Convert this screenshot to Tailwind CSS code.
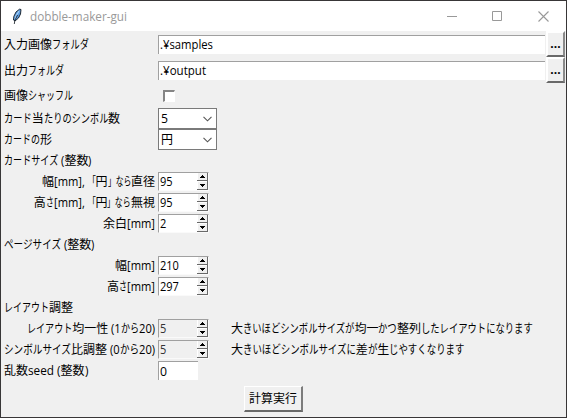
<!DOCTYPE html>
<html lang="ja">
<head>
<meta charset="utf-8">
<title>dobble-maker-gui</title>
<script src="https://cdn.jsdelivr.net/npm/@tailwindcss/browser@4"></script>
</head>
<body class="h-[418px] w-[567px] overflow-hidden bg-[#383637] font-['Open_Sans','Noto_Sans_CJK_JP',sans-serif] text-[12px] leading-[21px] text-black">
<div class="flex h-[418px] w-[567px] flex-col border border-[#383637] bg-[#f0f0f0]">
  <header class="flex h-[30px] shrink-0 items-center bg-white">
    <svg class="ml-[10px] h-[17px] w-[12px] shrink-0" viewBox="0 0 12 17">
      <path d="M2.5 12 2.8 8.5 5 4 8.5 1.2 10 1.5 9.5 6 7.5 10 4 13z" fill="#5b9be0" stroke="#111820" stroke-width=".9"/>
      <path d="M8 3 5.2 7.5 4 11" fill="none" stroke="#a9d2f6" stroke-width="1.1"/>
      <path d="M6.5 7 3.8 12.5 3.3 16" fill="none" stroke="#111820" stroke-width=".8"/>
    </svg>
    <span class="ml-[7px] whitespace-pre text-[#999]" data-w="97">dobble-maker-gui</span>
    <svg class="ml-auto mr-[17px] h-[11px] w-[102px]" viewBox="0 0 102 11" fill="none" stroke="#999">
      <path d="M0 5.5h10M45.5.5h9v9h-9z"/><path d="M91.5.5l10 10M101.5.5l-10 10" stroke-width="1.1"/>
    </svg>
  </header>

  <main class="flex flex-1 flex-col">
    <div class="flex h-[26px] items-center">
      <div class="w-[157px] pl-[3px]"><span class="whitespace-pre" data-w="85">入力画像フォルダ</span></div>
      <div class="flex h-[19px] w-[387px] items-center border-l border-t border-[#a0a0a0] bg-white pl-px"><span class="whitespace-pre" data-w="53">.¥samples</span></div>
      <button class="ml-px h-[26px] w-[19px] border-b-2 border-l-2 border-r-2 border-t-2 border-b-[#696969] border-l-white border-r-[#8a8a8a] border-t-white text-[12px] font-bold leading-[20px]">...</button>
    </div>
    <div class="flex h-[26px] items-center">
      <div class="w-[157px] pl-[3px]"><span class="whitespace-pre" data-w="60">出力フォルダ</span></div>
      <div class="flex h-[19px] w-[387px] items-center border-l border-t border-[#a0a0a0] bg-white pl-px"><span class="whitespace-pre" data-w="46">.¥output</span></div>
      <button class="ml-px h-[26px] w-[19px] border-b-2 border-l-2 border-r-2 border-t-2 border-b-[#696969] border-l-white border-r-[#8a8a8a] border-t-white text-[12px] font-bold leading-[20px]">...</button>
    </div>
    <div class="flex h-[25px] items-center">
      <div class="w-[162px] pl-[3px]"><span class="whitespace-pre" data-w="69">画像シャッフル</span></div>
      <div class="size-[12px] border-b border-l-2 border-r border-t-2 border-b-white border-l-[#858585] border-r-white border-t-[#858585] bg-white"></div>
    </div>
    <div class="flex h-[21px] items-center">
      <div class="w-[157px] pl-[3px]"><span class="whitespace-pre" data-w="116">カード当たりのシンボル数</span></div>
      <div class="flex h-[21px] w-[59px] items-center border border-[#7a7a7a] bg-white pl-[2px]"><span class="whitespace-pre" data-w="7">5</span>
        <svg class="ml-auto mr-[4px] h-[6px] w-[9px]" viewBox="0 0 9 6" fill="none" stroke="#555" stroke-width="1.1"><path d="M.5.8l4 4 4-4"/></svg></div>
    </div>
    <div class="flex h-[21px] items-center">
      <div class="w-[157px] pl-[3px]"><span class="whitespace-pre" data-w="48">カードの形</span></div>
      <div class="flex h-[21px] w-[59px] items-center border border-[#7a7a7a] bg-white pl-[2px]"><span class="whitespace-pre" data-w="12">円</span>
        <svg class="ml-auto mr-[4px] h-[6px] w-[9px]" viewBox="0 0 9 6" fill="none" stroke="#555" stroke-width="1.1"><path d="M.5.8l4 4 4-4"/></svg></div>
    </div>
    <div class="h-[21px] pl-[3px]"><span class="whitespace-pre" data-w="88">カードサイズ (整数)</span></div>
    <div class="flex h-[21px] items-center" data-spin="95"><div class="flex w-[154px] justify-end"><span class="whitespace-pre" data-w="113">幅[mm], 「円」なら直径</span></div></div>
    <div class="flex h-[21px] items-center" data-spin="95"><div class="flex w-[154px] justify-end"><span class="whitespace-pre" data-w="121">高さ[mm], 「円」なら無視</span></div></div>
    <div class="flex h-[21px] items-center" data-spin="2"><div class="flex w-[154px] justify-end"><span class="whitespace-pre" data-w="52">余白[mm]</span></div></div>
    <div class="h-[21px] pl-[3px]"><span class="whitespace-pre" data-w="91">ページサイズ (整数)</span></div>
    <div class="flex h-[21px] items-center" data-spin="210"><div class="flex w-[154px] justify-end"><span class="whitespace-pre" data-w="40">幅[mm]</span></div></div>
    <div class="flex h-[21px] items-center" data-spin="297"><div class="flex w-[154px] justify-end"><span class="whitespace-pre" data-w="48">高さ[mm]</span></div></div>
    <div class="h-[21px] pl-[3px]"><span class="whitespace-pre" data-w="69">レイアウト調整</span></div>
    <div class="flex h-[21px] items-center" data-spin="5" data-off><div class="flex w-[154px] justify-end"><span class="whitespace-pre" data-w="128">レイアウト均一性 (1から20)</span></div><div class="order-2 ml-[22px]"><span class="whitespace-pre" data-w="302">大きいほどシンボルサイズが均一かつ整列したレイアウトになります</span></div></div>
    <div class="flex h-[21px] items-center" data-spin="5" data-off><div class="flex w-[154px] justify-end"><span class="whitespace-pre" data-w="151">シンボルサイズ比調整 (0から20)</span></div><div class="order-2 ml-[22px]"><span class="whitespace-pre" data-w="234">大きいほどシンボルサイズに差が生じやすくなります</span></div></div>
    <div class="flex h-[21px] items-center">
      <div class="w-[157px] pl-[3px]"><span class="whitespace-pre" data-w="84">乱数seed (整数)</span></div>
      <div class="flex h-[19px] w-[40px] items-center border-l border-t border-[#a0a0a0] bg-white pl-px"><span class="whitespace-pre" data-w="7">0</span></div>
    </div>
    <button class="ml-[243px] mt-[5px] flex h-[26px] w-[59px] items-center justify-center border-b-2 border-l border-r-2 border-t border-b-[#696969] border-l-white border-r-[#7c7c7c] border-t-white"><span class="whitespace-pre" data-w="48">計算実行</span></button>
  </main>
</div>

<template id="spinner">
  <div class="order-1 ml-[3px] flex h-[19px] w-[51px] items-center justify-between border-b border-l border-r border-t border-b-[#fafafa] border-l-[#a0a0a0] border-r-[#fafafa] border-t-[#a0a0a0] bg-white pl-px">
    <span class="whitespace-pre"></span>
    <svg class="h-[17px] w-[11px] shrink-0" viewBox="0 0 11 17" shape-rendering="crispEdges">
      <path d="M0 0h11v17H0z" fill="#f0f0f0"/>
      <path d="M10.5 0v17M0 7.5h11M0 16.5h11" stroke="#696969" fill="none"/>
      <path d="M0 8.5h10M.5 0v7M.5 8v8" stroke="#fff" fill="none"/>
      <path d="M5 2h1v1h1v1h1v1H3V4h1V3h1zM3 11h5v1H7v1H6v1H5v-1H4v-1H3z" fill="#000"/>
    </svg>
  </div>
</template>
<script>
  // Add the number spinners
  document.querySelectorAll('[data-spin]').forEach(row => {
    const s = document.getElementById('spinner').content.firstElementChild.cloneNode(true);
    const t = s.querySelector('span');
    t.textContent = row.dataset.spin;
    t.dataset.w = row.dataset.spin.length * 6.3;
    if ('off' in row.dataset) { s.classList.remove('bg-white'); t.classList.add('text-[#333]'); }
    row.append(s);
  });
  const ctx = document.createElement('canvas').getContext('2d');
  ctx.font = '12px "Open Sans", "Noto Sans CJK JP", sans-serif';
  document.querySelectorAll('[data-w]').forEach(el => {
    const runs = el.textContent.match(/[\u4e00-\u9fff]+|[\u3000-\u30ff]+|[\u0000-\u00ff]+/g);
    el.textContent = '';
    el.classList.add('inline-flex');
    const parts = runs.map(r => {
      const s = document.createElement('span');
      s.textContent = r;
      s.className = 'block shrink-0 origin-left';
      el.append(s);
      const kind = /[\u4e00-\u9fff]/.test(r) ? 'han' : /[\u3000-\u30ff]/.test(r) ? 'kana' : 'latin';
      return { s, w: ctx.measureText(r).width, kind };
    });
    const sum = kind => parts.filter(p => p.kind === kind).reduce((a, p) => a + p.w, 0);
    const han = sum('han'), kana = sum('kana'), latin = sum('latin');
    const scale = { han: 1 };
    scale.latin = kana ? 0.93 : latin ? (el.dataset.w - han) / latin : 1;
    scale.kana = kana ? (el.dataset.w - han - latin * scale.latin) / kana : 1;
    parts.forEach(p => {
      if (p.kind === 'han') return;
      const k = scale[p.kind];
      p.s.style.transform = `scaleX(${k})`;
      p.s.style.marginRight = `${p.w * (k - 1)}px`;
    });
  });
</script>
</body>
</html>
